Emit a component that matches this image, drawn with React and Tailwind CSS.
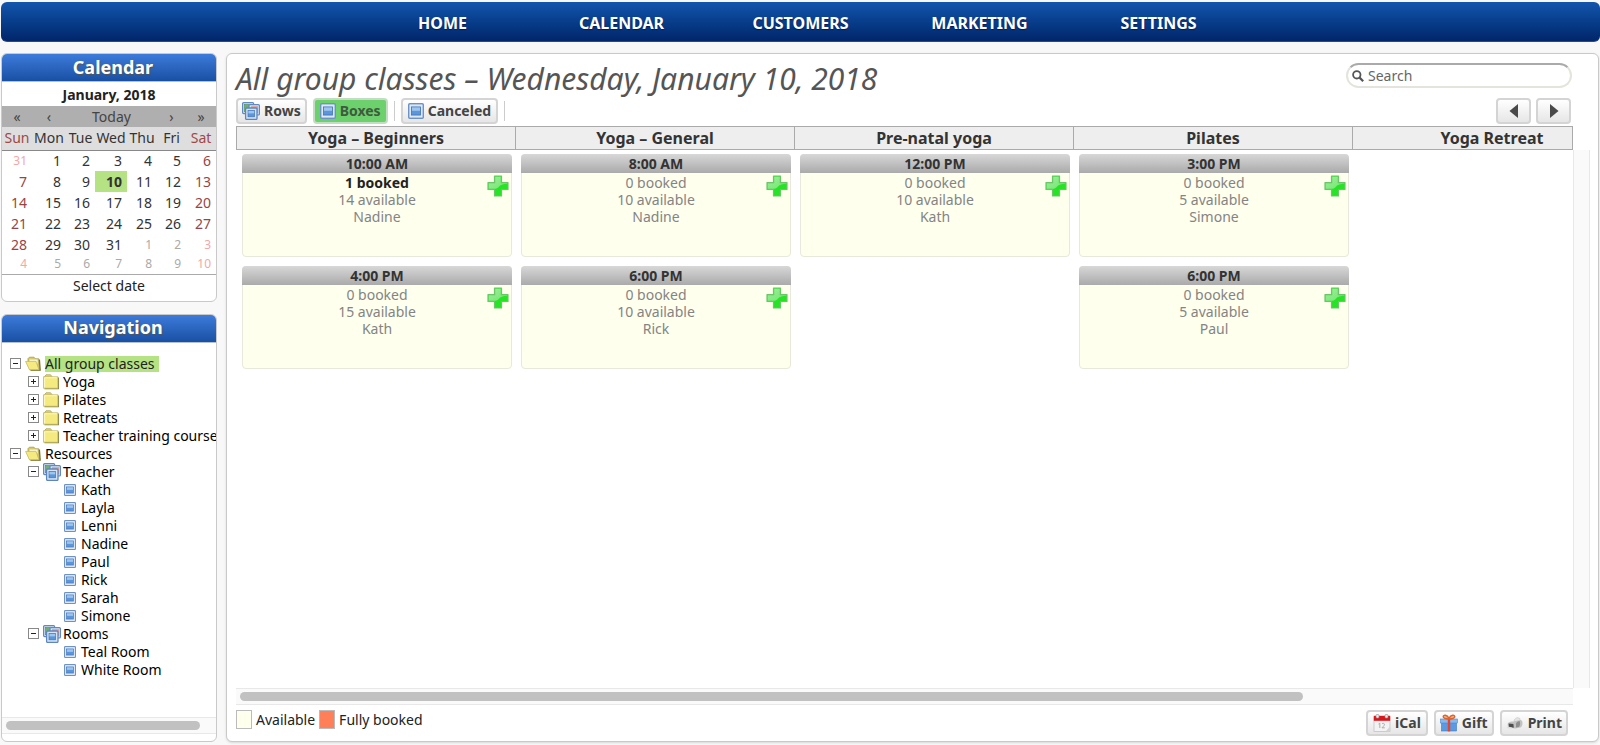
import React, { useState } from 'react';

const MENU = ['HOME', 'CALENDAR', 'CUSTOMERS', 'MARKETING', 'SETTINGS'];

const DAYS = ['Sun', 'Mon', 'Tue', 'Wed', 'Thu', 'Fri', 'Sat'];

const WEEKS = [
  [31, 1, 2, 3, 4, 5, 6],
  [7, 8, 9, 10, 11, 12, 13],
  [14, 15, 16, 17, 18, 19, 20],
  [21, 22, 23, 24, 25, 26, 27],
  [28, 29, 30, 31, 1, 2, 3],
  [4, 5, 6, 7, 8, 9, 10],
];

const TREE = [
  { level: 0, label: 'All group classes', icon: 'open', toggle: '-', selected: true },
  { level: 1, label: 'Yoga', icon: 'folder', toggle: '+' },
  { level: 1, label: 'Pilates', icon: 'folder', toggle: '+' },
  { level: 1, label: 'Retreats', icon: 'folder', toggle: '+' },
  { level: 1, label: 'Teacher training course', icon: 'folder', toggle: '+' },
  { level: 0, label: 'Resources', icon: 'open', toggle: '-' },
  { level: 1, label: 'Teacher', icon: 'stack', toggle: '-' },
  { level: 2, label: 'Kath', icon: 'leaf' },
  { level: 2, label: 'Layla', icon: 'leaf' },
  { level: 2, label: 'Lenni', icon: 'leaf' },
  { level: 2, label: 'Nadine', icon: 'leaf' },
  { level: 2, label: 'Paul', icon: 'leaf' },
  { level: 2, label: 'Rick', icon: 'leaf' },
  { level: 2, label: 'Sarah', icon: 'leaf' },
  { level: 2, label: 'Simone', icon: 'leaf' },
  { level: 1, label: 'Rooms', icon: 'stack', toggle: '-' },
  { level: 2, label: 'Teal Room', icon: 'leaf' },
  { level: 2, label: 'White Room', icon: 'leaf' },
];

const COLUMNS = [
  {
    title: 'Yoga – Beginners',
    classes: [
      { time: '10:00 AM', booked: 1, available: 14, teacher: 'Nadine' },
      { time: '4:00 PM', booked: 0, available: 15, teacher: 'Kath' },
    ],
  },
  {
    title: 'Yoga – General',
    classes: [
      { time: '8:00 AM', booked: 0, available: 10, teacher: 'Nadine' },
      { time: '6:00 PM', booked: 0, available: 10, teacher: 'Rick' },
    ],
  },
  {
    title: 'Pre-natal yoga',
    classes: [{ time: '12:00 PM', booked: 0, available: 10, teacher: 'Kath' }],
  },
  {
    title: 'Pilates',
    classes: [
      { time: '3:00 PM', booked: 0, available: 5, teacher: 'Simone' },
      { time: '6:00 PM', booked: 0, available: 5, teacher: 'Paul' },
    ],
  },
  { title: 'Yoga Retreat', classes: [] },
];

function BoxIcon({ className }) {
  return (
    <svg viewBox="0 0 16 16" className={className} aria-hidden="true">
      <rect x="0.75" y="0.75" width="14.5" height="14.5" rx="1" fill="#c3d6ef" stroke="#6f92c6" strokeWidth="1.5" />
      <rect x="2.2" y="2.2" width="11.6" height="11.6" fill="none" stroke="#e6effa" strokeWidth="1" />
      <rect x="3.5" y="4" width="9" height="8" fill="#5b95da" stroke="#4674b4" strokeWidth="0.8" />
      <rect x="4" y="4.4" width="8" height="3.4" fill="#9cc5ef" />
    </svg>
  );
}

function StackIcon({ className }) {
  return (
    <svg viewBox="0 0 18 18" className={className} aria-hidden="true">
      <rect x="0.6" y="0.6" width="11" height="11" rx="1" fill="#d5e2f2" stroke="#6089c0" strokeWidth="1.2" />
      <rect x="2.4" y="2.4" width="7.4" height="7.4" fill="#72b06c" stroke="#548a64" strokeWidth="0.6" />
      <rect x="7" y="2.6" width="10.4" height="10.4" rx="1" fill="#d9e4f3" stroke="#6089c0" strokeWidth="1.2" />
      <rect x="9" y="4.2" width="7" height="6.8" fill="#e39a8e" />
      <rect x="3.6" y="6" width="11.4" height="11.4" rx="1" fill="#d5e3f5" stroke="#5d86be" strokeWidth="1.3" />
      <rect x="6" y="8.6" width="6.6" height="6.2" fill="#5b95da" stroke="#4674b4" strokeWidth="0.7" />
      <rect x="6.4" y="9" width="5.8" height="2.4" fill="#9cc5ef" />
    </svg>
  );
}

function FolderIcon() {
  return (
    <svg viewBox="0 0 16 16" className="h-4 w-4" aria-hidden="true">
      <path d="M1.5 14.6h13.9V3.5" fill="none" stroke="#86814f" strokeWidth="1.2" />
      <path d="M1.8 2.4L3 0.8h4.6L8.8 2.4v1h-7z" fill="#e5d978" stroke="#a89f5b" strokeWidth="0.8" />
      <rect x="0.6" y="2.8" width="14.2" height="11.4" fill="#f4ea80" stroke="#c4b966" strokeWidth="0.8" />
      <path d="M1.6 13.2V3.8h12.2" fill="none" stroke="#fdf9c4" strokeWidth="1" />
    </svg>
  );
}

function OpenFolderIcon() {
  return (
    <svg viewBox="0 0 16 16" className="h-4 w-4" aria-hidden="true">
      <path d="M3 4.5V2.6L4.4 1.2H9l1.4 1.6h3.4l.8 11.400H5z" fill="#d8ca66" stroke="#a39a58" strokeWidth="0.8" />
      <path d="M14.4 3.6l.8 10.6H6" fill="none" stroke="#77713f" strokeWidth="1.3" />
      <path d="M4.500 3.4h8.100v4H4.500z" fill="#faf6d8" />
      <path d="M0.6 5.4h10.400l3 8.300H4.400z" fill="#f4ea80" stroke="#c4b966" strokeWidth="0.8" />
    </svg>
  );
}

function PlusIcon() {
  return (
    <svg viewBox="0 0 22 22" className="h-[22px] w-[22px]" aria-hidden="true">
      <defs>
        <linearGradient id="plusShine" x1="0" y1="0" x2="1" y2="1">
          <stop offset="0" stopColor="#a2eda0" />
          <stop offset="1" stopColor="#6fe56b" />
        </linearGradient>
      </defs>
      <path d="M7.500 1h7v6.500H21v7h-6.500V21h-7v-6.500H1v-7h6.500z" fill="#27e326" stroke="#69c768" strokeWidth="1.200" strokeLinejoin="round" />
      <path d="M8.200 1.700h5.600v6.500h6.500v.6c-4 .2-6.600 1-8.200 2.600-1.200 1.400-2.600 2.400-4.600 2.400H1.700V8.200h6.500z" fill="url(#plusShine)" />
    </svg>
  );
}

function CalIcon() {
  return (
    <svg viewBox="0 0 18 18" className="h-[18px] w-[18px]" aria-hidden="true">
      <rect x="1" y="3" width="16" height="14.500" fill="#f3f3f3" stroke="#c2c2c2" strokeWidth="0.8" />
      <path d="M0.800 1.800h16.400v5H0.800z" fill="#d9161c" />
      <rect x="3" y="0.500" width="3" height="3.600" rx="1" fill="#e8e8e8" stroke="#8d8d8d" strokeWidth="0.600" />
      <rect x="12" y="0.500" width="3" height="3.600" rx="1" fill="#e8e8e8" stroke="#8d8d8d" strokeWidth="0.600" />
      <path d="M5.500 10l1.300-.8V14M9 9.800c1-1 2.800-.4 2.400 1-.2.900-1.400 1.800-2.400 3h2.800" fill="none" stroke="#a5a5a5" strokeWidth="0.900" />
      <path d="M17 12.500l-4.500 5H17z" fill="#d4d4d4" />
    </svg>
  );
}

function GiftIcon() {
  return (
    <svg viewBox="0 0 18 18" className="h-[18px] w-[18px]" aria-hidden="true">
      <rect x="1.500" y="8" width="15" height="9" fill="#5b9ae2" stroke="#3f79c4" strokeWidth="0.600" />
      <rect x="0.500" y="5" width="17" height="4" fill="#86b9ee" stroke="#4b86cf" strokeWidth="0.600" />
      <rect x="7.800" y="5" width="2.400" height="12.400" fill="#e2472e" />
      <path d="M9 5C7 5 3.200 4.800 3.200 2.600 3.200.6 7 .4 9 4.400 11 .4 14.800.6 14.800 2.600 14.800 4.800 11 5 9 5z" fill="#f3b27c" stroke="#dd622b" strokeWidth="1.400" />
    </svg>
  );
}

function PrinterIcon() {
  return (
    <svg viewBox="0 0 18 18" className="h-[18px] w-[18px]" aria-hidden="true">
      <path d="M8 6l3-2.500 3 1V8L9 9z" fill="#e4e4e4" stroke="#c4c4c4" strokeWidth="0.600" />
      <path d="M2 9c1.500-1.400 3.500-1.600 5-1.600L14.500 6c1.200 0 2 1 2 3s-.6 4-2 4.500L9 14.500l-6.500-1C1.500 12 1.500 10 2 9z" fill="#c2c2c2" />
      <path d="M2.600 9.400l4.800.5.4 3.800-4.800-.9z" fill="#4e4e4e" />
      <path d="M10 9.500c1-1.600 2.600-2.400 3.600-2.400.8 2 .6 4-.4 5.600L10 13.500z" fill="#8e8e8e" />
      <path d="M1 12.700l5 .7-.8 1.400-4-.9z" fill="#dedede" />
    </svg>
  );
}

const TREE_ICONS = {
  open: <OpenFolderIcon />,
  folder: <FolderIcon />,
  stack: <StackIcon className="h-[18px] w-[18px]" />,
  leaf: <BoxIcon className="h-3 w-3" />,
};

const TREE_INDENT = ['pl-2', 'pl-[26px]', 'pl-[62px]'];

function PanelTitle({ children }) {
  return (
    <h2 className="flex h-7 items-center justify-center border-b border-[#b4c0d4] bg-linear-to-b from-[#3d7bdb] to-[#1850a3] pb-[2px] pl-2 text-lg leading-6 font-bold text-white [text-shadow:1px_1px_1px_#555]">
      {children}
    </h2>
  );
}

function ScrollBar({ thumb }) {
  return (
    <div className="h-[17px] border-y border-[#e8e8e8] bg-[#fafafa] px-1 pt-[3px]">
      <div className={`h-[9px] rounded-full bg-[#c1c1c1] ${thumb}`} />
    </div>
  );
}

function ToolButton({ children, active, className = 'px-[5px]', ...rest }) {
  const look = active
    ? 'border-[#c4dcc4] bg-[#6cd06c] text-[#3f5a3f]'
    : 'border-[#d4d4d4] bg-linear-to-b from-white to-[#e6e6e6] text-[#444]';
  return (
    <button
      type="button"
      className={`flex h-[26px] items-center gap-1 rounded-[4px] border-2 text-sm font-bold ${look} ${className}`}
      {...rest}
    >
      {children}
    </button>
  );
}

function Calendar() {
  return (
    <section className="overflow-hidden rounded-md border border-[#c9c9c9] bg-white">
      <PanelTitle>Calendar</PanelTitle>
      <table className="w-full table-fixed border-collapse text-sm leading-5 text-[#333]">
        <caption className="h-6 pt-[3px] text-sm font-bold text-[#222]">January, 2018</caption>
        <colgroup>
          <col className="w-[30px]" />
          <col className="w-[34px]" />
          <col className="w-[29px]" />
          <col className="w-[32px]" />
          <col className="w-[30px]" />
          <col className="w-[29px]" />
          <col />
        </colgroup>
        <thead>
          <tr className="h-[21px] bg-[#afafaf] text-[#444]">
            <td className="p-0 text-center"><button type="button" aria-label="Previous year">«</button></td>
            <td className="p-0 text-center"><button type="button" aria-label="Previous month">‹</button></td>
            <td colSpan={3} className="p-0 text-center"><button type="button">Today</button></td>
            <td className="p-0 text-center"><button type="button" aria-label="Next month">›</button></td>
            <td className="p-0 text-center"><button type="button" aria-label="Next year">»</button></td>
          </tr>
          <tr className="h-[23px] border-b border-[#888] bg-[#dedede]">
            {DAYS.map((day, i) => (
              <th
                key={day}
                scope="col"
                className={`p-0 text-center font-normal whitespace-nowrap ${i === 0 || i === 6 ? 'text-[#a04848]' : ''}`}
              >
                {day}
              </th>
            ))}
          </tr>
        </thead>
        <tbody className="border-b border-[#aaa]">
          {WEEKS.map((week, w) => (
            <tr key={w} className={w === 5 ? 'h-[19px] leading-4' : 'h-[21px]'}>
              {week.map((n, d) => {
                const weekend = d === 0 || d === 6;
                const other = (w === 0 && n > 7) || (w > 3 && n < 15);
                const today = w === 1 && n === 10;
                const color = other
                  ? weekend
                    ? 'text-[#f2a8a8]'
                    : 'text-[#aaa]'
                  : weekend
                    ? 'text-[#984444]'
                    : '';
                return (
                  <td
                    key={d}
                    className={`py-0 pr-[5px] pl-0 text-right ${color} ${other ? 'text-xs' : ''} ${today ? 'bg-[#b5e283] font-bold' : ''}`}
                  >
                    {n}
                  </td>
                );
              })}
            </tr>
          ))}
        </tbody>
      </table>
      <button type="button" className="block h-[26px] w-full pb-1 text-center text-sm leading-5 text-[#222]">
        Select date
      </button>
    </section>
  );
}

function Navigation() {
  return (
    <section className="flex grow flex-col overflow-hidden rounded-md border border-[#c9c9c9] bg-white pb-[7px]">
      <PanelTitle>Navigation</PanelTitle>
      <ul className="grow overflow-hidden pt-3">
        {TREE.map((node, i) => (
          <li key={i} className={`flex h-[18px] items-center text-sm whitespace-nowrap text-black ${TREE_INDENT[node.level]}`}>
            {node.toggle && (
              <button
                type="button"
                aria-label={node.toggle === '+' ? 'Expand' : 'Collapse'}
                className="mr-1 h-[11px] w-[11px] shrink-0"
              >
                <svg viewBox="0 0 11 11" className="h-[11px] w-[11px]" aria-hidden="true">
                  <rect x="0.500" y="0.500" width="10" height="10" fill="#fff" stroke="#888" />
                  <path d={node.toggle === '+' ? 'M3 5.5h5M5.5 3v5' : 'M3 5.5h5'} stroke="#222" fill="none" />
                </svg>
              </button>
            )}
            <span className={`flex shrink-0 items-center ${node.level === 2 ? 'w-[17px]' : 'w-5'}`}>{TREE_ICONS[node.icon]}</span>
            <a href="#" className={`leading-[16px] ${node.selected ? 'bg-[#b5e283] pr-1 text-[#222]' : ''}`}>
              {node.label}
            </a>
          </li>
        ))}
      </ul>
      <ScrollBar thumb="w-[94%]" />
    </section>
  );
}

function ClassCard({ item }) {
  return (
    <article className="h-[103px] rounded-[4px] border border-[#e8e8dc] bg-[#ffffee] text-center text-sm leading-[17px] text-[#848484]">
      <h3 className="-mx-px -mt-px h-[19px] rounded-t-[4px] bg-linear-to-b from-[#d8d8d8] to-[#aaaaaa] text-sm leading-[19px] font-bold text-[#333]">
        {item.time}
      </h3>
      <div className="relative pt-px">
        <p className={item.booked ? 'font-bold text-[#222]' : ''}>{item.booked} booked</p>
        <p>{item.available} available</p>
        <p>{item.teacher}</p>
        <button type="button" aria-label="Add booking" className="absolute top-[2px] right-[2px]">
          <PlusIcon />
        </button>
      </div>
    </article>
  );
}

export default function App() {
  const [view, setView] = useState('Boxes');
  return (
    <div className="flex min-h-screen flex-col bg-[#f8f8f8] pt-[2px] pl-px font-['Noto_Sans',sans-serif]">
      <nav className="flex h-10 items-center justify-center rounded-md border-b border-[#274a86] bg-linear-to-b from-[#1356ad] to-[#02266a] pt-[2px]">
        {MENU.map((label) => (
          <a
            key={label}
            href="#"
            className="w-[179px] text-center text-base font-bold text-white [text-shadow:0_1px_1px_#001a4d]"
          >
            {label}
          </a>
        ))}
      </nav>

      <div className="flex grow gap-[9px] pt-[11px] pb-[3px]">
        <aside className="flex w-[216px] shrink-0 flex-col gap-3">
          <Calendar />
          <Navigation />
        </aside>

        <main className="mr-px flex min-w-0 grow flex-col rounded-md border border-[#c9c9c9] bg-white pl-[9px] shadow-sm">
          <div className="flex h-[44px] items-start justify-between pt-[9px] pr-[26px]">
            <h1 className="text-[30px] leading-8 text-[#555] italic">All group classes – Wednesday, January 10, 2018</h1>
            <label className="flex h-[25px] w-[226px] items-center gap-1 rounded-full border-2 border-[#e4e4dc] border-t-[#aaa] bg-white px-1">
              <svg viewBox="0 0 12 12" className="h-3 w-3 shrink-0" aria-hidden="true">
                <circle cx="4.800" cy="4.800" r="3.700" fill="none" stroke="#555" strokeWidth="1.800" />
                <path d="M7.600 7.600l3.600 3.600" stroke="#555" strokeWidth="2.200" />
              </svg>
              <input
                type="text"
                aria-label="Search"
                placeholder="Search"
                className="w-full min-w-0 bg-transparent text-sm text-[#555] outline-none placeholder:text-[#666]"
              />
            </label>
          </div>

          <div className="flex items-center justify-between pr-[27px]">
            <div className="flex items-center gap-[6px]">
              <ToolButton active={view === 'Rows'} onClick={() => setView('Rows')} className="px-1">
                <StackIcon className="h-[18px] w-[18px]" />
                Rows
              </ToolButton>
              <ToolButton active={view === 'Boxes'} onClick={() => setView('Boxes')}>
                <BoxIcon className="h-4 w-4" />
                Boxes
              </ToolButton>
              <span className="h-5 w-px bg-[#ccc]" />
              <ToolButton active={view === 'Canceled'} onClick={() => setView('Canceled')}>
                <BoxIcon className="h-4 w-4" />
                Canceled
              </ToolButton>
              <span className="h-5 w-px bg-[#ccc]" />
            </div>
            <div className="flex gap-[5px]">
              <ToolButton aria-label="Previous day" className="w-[35px] justify-center">
                <svg viewBox="0 0 10 14" className="h-3.5 w-2.5" aria-hidden="true">
                  <path d="M9 0v14L0.500 7z" fill="#4a4a4a" />
                </svg>
              </ToolButton>
              <ToolButton aria-label="Next day" className="w-[35px] justify-center">
                <svg viewBox="0 0 10 14" className="h-3.5 w-2.5" aria-hidden="true">
                  <path d="M1 0v14L9.500 7z" fill="#4a4a4a" />
                </svg>
              </ToolButton>
            </div>
          </div>

          <div className="mt-[2px] mr-[25px] flex h-6 overflow-hidden border border-[#aaa] bg-[#eee]">
            {COLUMNS.map((col) => (
              <h2
                key={col.title}
                className="w-[279px] shrink-0 border-r border-[#aaa] text-center text-base leading-[22px] font-bold text-[#333]"
              >
                {col.title}
              </h2>
            ))}
          </div>

          <div className="mr-2 flex grow">
            <div className="flex min-w-0 grow overflow-hidden pl-px">
              {COLUMNS.map((col) => (
                <div key={col.title} className="flex w-[279px] shrink-0 flex-col gap-[9px] pt-1 pr-1 pl-[5px]">
                  {col.classes.map((item) => (
                    <ClassCard key={item.time} item={item} />
                  ))}
                </div>
              ))}
            </div>
            <div className="w-[17px] shrink-0 border-x border-[#e8e8e8] bg-[#fafafa]" />
          </div>

          <div className="mr-[25px]">
            <ScrollBar thumb="w-[80%]" />
          </div>

          <div className="flex h-[36px] items-start justify-between pt-[5px] pr-[30px]">
            <div className="flex items-center gap-1 text-sm leading-[18px] text-[#222]">
              <span className="h-[19px] w-4 border border-[#bbb] bg-[#ffffee]" />
              <span>Available</span>
              <span className="h-[19px] w-4 border border-[#bbb] bg-[#ff7f58]" />
              <span>Fully booked</span>
            </div>
            <div className="flex gap-[6px]">
              <ToolButton>
                <CalIcon />
                iCal
              </ToolButton>
              <ToolButton className="px-1">
                <GiftIcon />
                Gift
              </ToolButton>
              <ToolButton className="px-1">
                <PrinterIcon />
                Print
              </ToolButton>
            </div>
          </div>
        </main>
      </div>
    </div>
  );
}
